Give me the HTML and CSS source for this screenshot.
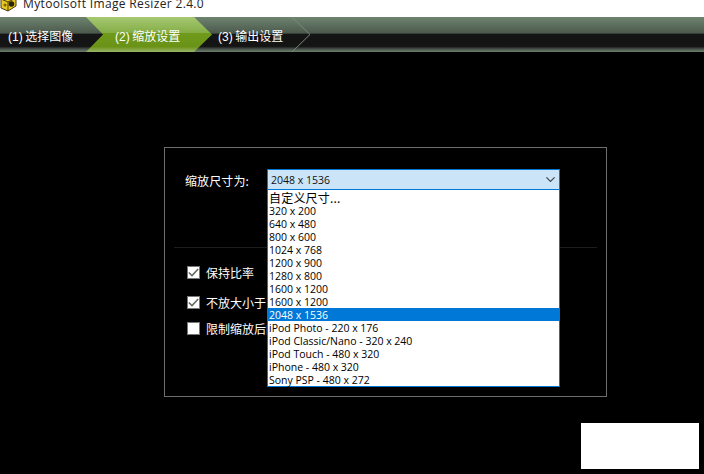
FILE: index.html
```html
<!DOCTYPE html>
<html lang="zh">
<head>
<meta charset="utf-8">
<title>Mytoolsoft Image Resizer 2.4.0</title>
<link rel="stylesheet" href="styles.css">
</head>
<body>
<div class="app">
  <header class="titlebar">
    <svg class="logo" width="18" height="17" viewBox="0 0 18 17">
      <path d="M1 3 L9 0 L16 2 L16 11 L8 16 L1 13 Z" fill="#e8c820" stroke="#4a3c0c" stroke-width="1"/>
      <path d="M1 4 L8 7 L8 16" fill="none" stroke="#4a3c0c" stroke-width="1"/>
      <path d="M8 7 L16 3" fill="none" stroke="#4a3c0c" stroke-width="1"/>
      <circle cx="11.5" cy="9" r="2.8" fill="#2a2408"/>
      <circle cx="5" cy="10" r="1.5" fill="#7a6410"/>
    </svg>
    <span class="app-name">Mytoolsoft Image Resizer 2.4.0</span>
  </header>

  <nav class="toolbar">
    <svg class="steps-art" width="704" height="35" viewBox="0 0 704 35" aria-hidden="true">
      <defs>
        <linearGradient id="active" x1="0" y1="0" x2="0" y2="1">
          <stop offset="0" stop-color="#a6c873"/>
          <stop offset="0.46" stop-color="#84ad45"/>
          <stop offset="0.47" stop-color="#6f9a1c"/>
          <stop offset="0.85" stop-color="#6a9316"/>
          <stop offset="1" stop-color="#9ab56a"/>
        </linearGradient>
      </defs>
      <path d="M86 0 H194 L212 17.5 L194 35 H86 L103 17.5 Z" fill="url(#active)"/>
      <path d="M292 0 L310 17.5 L292 35" fill="none" stroke="#7c8a7c" stroke-width="1"/>
    </svg>
    <div class="step step-one"><span class="num">(1)</span> 选择图像</div>
    <div class="step step-two"><span class="num">(2)</span> 缩放设置</div>
    <div class="step step-three"><span class="num">(3)</span> 输出设置</div>
  </nav>

  <main class="stage">
    <section class="panel">
      <div class="size-row">
        <label class="size-label">缩放尺寸为:</label>
        <div class="combo">
          <span>2048 x 1536</span>
          <svg class="chevron" width="9" height="5" viewBox="0 0 9 5"><path d="M0.4 0.4 L4.5 4.4 L8.6 0.4" fill="none" stroke="#444" stroke-width="1.2"/></svg>
          <ul class="list">
            <li class="cjk">自定义尺寸...</li>
            <li>320 x 200</li>
            <li>640 x 480</li>
            <li>800 x 600</li>
            <li>1024 x 768</li>
            <li>1200 x 900</li>
            <li>1280 x 800</li>
            <li>1600 x 1200</li>
            <li>1600 x 1200</li>
            <li class="selected">2048 x 1536</li>
            <li>iPod Photo - 220 x 176</li>
            <li>iPod Classic/Nano - 320 x 240</li>
            <li>iPod Touch - 480 x 320</li>
            <li>iPhone - 480 x 320</li>
            <li>Sony PSP - 480 x 272</li>
          </ul>
        </div>
      </div>
      <hr class="divider">
      <div class="options">
        <div class="option">
          <span class="box"><svg width="11" height="9" viewBox="0 0 11 9"><path d="M0.8 4.5 L4 7.6 L10.2 1" fill="none" stroke="#5f6b5f" stroke-width="1.5"/></svg></span>
          <span>保持比率</span>
        </div>
        <div class="option option-shifted">
          <span class="box"><svg width="11" height="9" viewBox="0 0 11 9"><path d="M0.8 4.5 L4 7.6 L10.2 1" fill="none" stroke="#5f6b5f" stroke-width="1.5"/></svg></span>
          <span>不放大小于目标尺寸的图像</span>
        </div>
        <div class="option">
          <span class="box"></span>
          <span>限制缩放后的文件大小</span>
        </div>
      </div>
    </section>
    <div class="patch"></div>
  </main>
</div>
</body>
</html>
```
FILE: styles.css
```css
* { box-sizing: border-box; }
html, body { margin: 0; padding: 0; }
body {
  width: 704px;
  height: 474px;
  overflow: hidden;
  background: #000;
  font-family: "Noto Sans CJK SC", sans-serif;
}
.app { display: flex; flex-direction: column; height: 474px; }

.titlebar {
  height: 17px;
  background: #fff;
  display: flex;
  align-items: flex-start;
  overflow: hidden;
  flex: none;
}
.logo { flex: none; margin-top: -5px; }
.app-name {
  margin-left: 5px;
  margin-top: -5px;
  font-family: "Open Sans", sans-serif;
  font-size: 12px;
  letter-spacing: 0.35px;
  line-height: 17px;
  color: #222;
  white-space: nowrap;
}

.toolbar {
  position: relative;
  height: 35px;
  flex: none;
  display: flex;
  align-items: center;
  color: #fff;
  font-size: 12px;
  background: linear-gradient(to bottom, #6e846f 0, #4c5a4d 45%, #3c453d 47%, #151515 48%, #141414 84%, #4a554b 92%, #6d7f6e 100%);
}
.steps-art { position: absolute; left: 0; top: 0; }
.step { position: relative; white-space: nowrap; line-height: 18px; padding-top: 4px; }
.step-one { margin-left: 8px; width: 107px; }
.step-two { width: 103px; }
.num { font-family: "Liberation Sans", sans-serif; }

.stage { position: relative; flex: 1; display: block; padding: 95px 0 0 164px; }

.panel {
  width: 443px;
  height: 250px;
  border: 1px solid #6e6e6e;
  padding: 21px 9px 0 9px;
  color: #fff;
  font-size: 12px;
}
.size-row { display: flex; align-items: center; height: 22px; padding-left: 11px; }
.size-label { width: 82px; flex: none; letter-spacing: 0.1px; }
.combo {
  position: relative;
  width: 293px;
  height: 22px;
  flex: none;
  background: #cce4f7;
  border: 1px solid #0078d7;
  border-bottom-width: 2px;
  color: #111;
  font-family: "Open Sans", sans-serif;
  font-size: 10.5px;
  line-height: 20px;
  padding-left: 3px;
}
.chevron { position: absolute; right: 4px; top: 7px; }
.list {
  position: absolute;
  left: -1px;
  top: 20px;
  width: 293px;
  margin: 0;
  padding: 0;
  list-style: none;
  background: #fff;
  border: 1px solid #0078d7;
  border-top: 0;
  z-index: 2;
}
.list li { height: 13px; line-height: 15px; padding-left: 1px; white-space: nowrap; color: #000; }
.list .cjk { height: 14px; line-height: 15px; font-family: "Noto Sans CJK SC", sans-serif; font-size: 12px; letter-spacing: 0.2px; }
.list .selected { background: #0078d7; color: #fff; }

.divider { border: 0; height: 1px; background: #1c1c1c; margin: 56px 0 0; }

.options { margin-top: 16px; display: flex; flex-direction: column; gap: 11px; padding-left: 13px; }
.option { display: flex; align-items: center; gap: 6px; height: 17px; white-space: nowrap; }
.option-shifted { position: relative; top: 2px; }
.box {
  width: 13px;
  height: 13px;
  background: #fff;
  border: 1px solid #777;
  display: flex;
  align-items: center;
  justify-content: center;
  flex: none;
}

.patch { position: absolute; left: 581px; top: 371px; width: 118px; height: 46px; background: #fff; }
```
